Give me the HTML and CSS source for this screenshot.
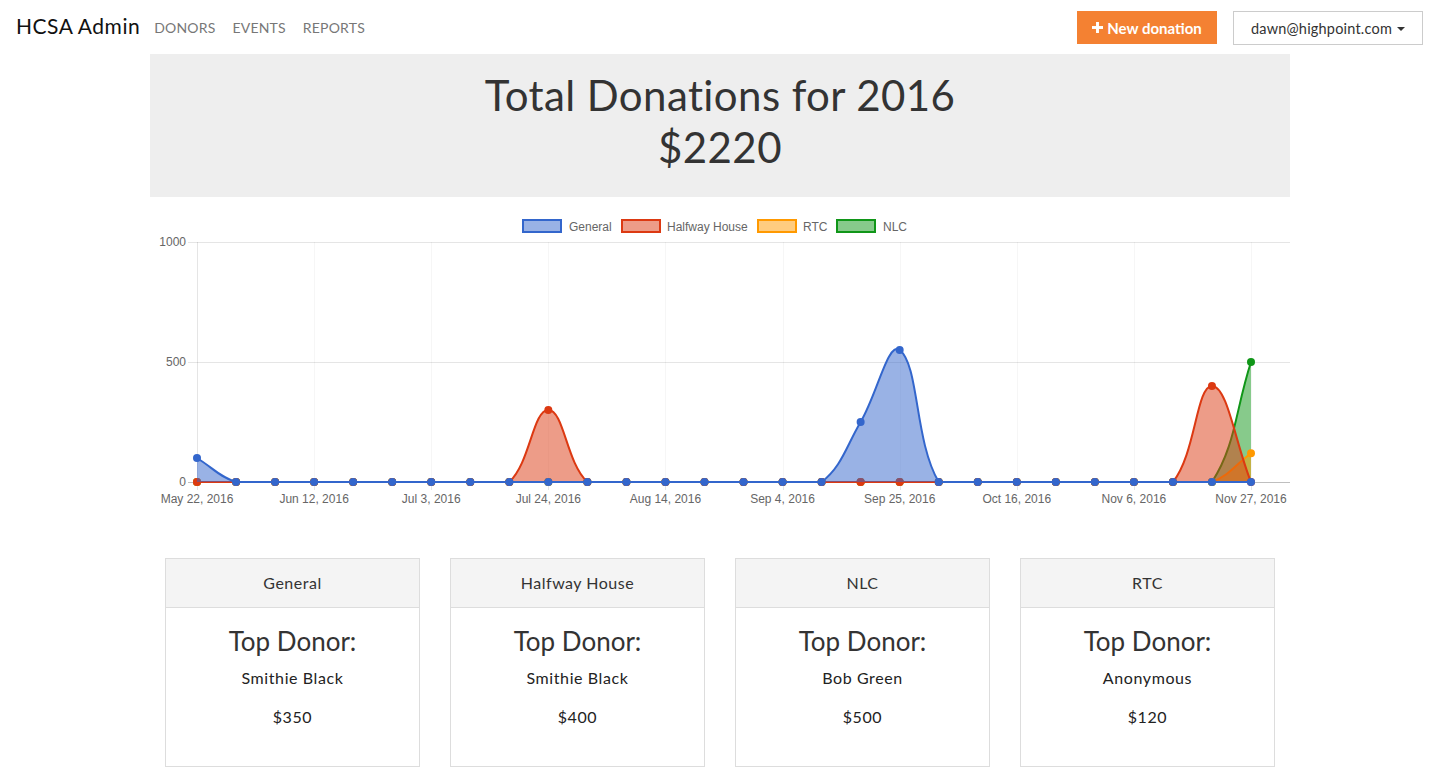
FILE: index.html
```html
<!DOCTYPE html>
<html lang="en">
<head>
<meta charset="utf-8">
<title>HCSA Admin</title>
<link rel="stylesheet" href="styles.css">
</head>
<body>
<nav class="navbar">
  <div class="nav-left">
    <a class="brand" href="#">HCSA Admin</a>
    <ul class="nav-links">
      <li><a href="#">DONORS</a></li>
      <li><a href="#">EVENTS</a></li>
      <li><a href="#">REPORTS</a></li>
    </ul>
  </div>
  <div class="nav-right">
    <button class="btn-new" type="button">
      <svg class="plus" viewBox="0 0 12 12" width="11" height="11" aria-hidden="true"><rect x="4.4" y="0" width="3.2" height="12" fill="#fff"/><rect x="0" y="4.4" width="12" height="3.2" fill="#fff"/></svg>
      New donation
    </button>
    <button class="btn-user" type="button">dawn@highpoint.com <span class="caret"></span></button>
  </div>
</nav>

<main class="container">
  <section class="jumbotron">
    <h1>Total Donations for 2016</h1>
    <h1>$2220</h1>
  </section>

  <section class="chart-wrap">
    <svg id="chart" class="chart" width="1140" height="300" viewBox="0 0 1140 300">
      <g class="legend">
        <rect x="373" y="10" width="38" height="12" fill="rgba(51,102,204,0.5)" stroke="#3366cc" stroke-width="2"/>
        <text x="419" y="21">General</text>
        <rect x="472" y="10" width="38" height="12" fill="rgba(220,57,18,0.5)" stroke="#dc3912" stroke-width="2"/>
        <text x="517" y="21">Halfway House</text>
        <rect x="608" y="10" width="38" height="12" fill="rgba(255,153,0,0.5)" stroke="#ff9900" stroke-width="2"/>
        <text x="653" y="21">RTC</text>
        <rect x="687" y="10" width="38" height="12" fill="rgba(16,150,24,0.5)" stroke="#109618" stroke-width="2"/>
        <text x="733" y="21">NLC</text>
      </g>
      <g id="grid"></g>
      <g id="series"></g>
    </svg>
  </section>

  <section class="cards">
    <div class="card">
      <div class="card-head">General</div>
      <div class="card-body">
        <h2>Top Donor:</h2>
        <p class="donor">Smithie Black</p>
        <p class="amount">$350</p>
      </div>
    </div>
    <div class="card">
      <div class="card-head">Halfway House</div>
      <div class="card-body">
        <h2>Top Donor:</h2>
        <p class="donor">Smithie Black</p>
        <p class="amount">$400</p>
      </div>
    </div>
    <div class="card">
      <div class="card-head">NLC</div>
      <div class="card-body">
        <h2>Top Donor:</h2>
        <p class="donor">Bob Green</p>
        <p class="amount">$500</p>
      </div>
    </div>
    <div class="card">
      <div class="card-head">RTC</div>
      <div class="card-body">
        <h2>Top Donor:</h2>
        <p class="donor">Anonymous</p>
        <p class="amount">$120</p>
      </div>
    </div>
  </section>
</main>
<script src="chart.js"></script>
</body>
</html>
```

FILE: styles.css
```css
* { box-sizing: border-box; }
html, body { margin: 0; padding: 0; background: #fff; }
body {
  font-family: Lato, "Open Sans", sans-serif;
  color: #333;
  font-size: 15px;
}
.navbar {
  height: 54px;
  display: flex;
  align-items: center;
  justify-content: space-between;
  padding: 0 17px 0 16px;
}
.nav-left { display: flex; align-items: center; }
.brand {
  font-size: 21px;
  color: #111;
  text-decoration: none;
  margin-top: -4px;
  letter-spacing: 0.5px;
}
.nav-links {
  display: flex;
  list-style: none;
  margin: 0 0 0 14px;
  padding: 0;
  gap: 17px;
}
.nav-links a {
  color: #777;
  text-decoration: none;
  font-size: 14px;
  letter-spacing: 0.2px;
}
.nav-right { display: flex; align-items: center; gap: 16px; margin-top: 2px; }
.btn-new {
  height: 33px;
  width: 140px;
  background: #f48132;
  border: 0;
  color: #fff;
  font-family: inherit;
  font-weight: 700;
  font-size: 15px;
  display: flex;
  align-items: center;
  justify-content: center;
  gap: 4px;
  padding: 0;
  margin-top: -1px;
}
.plus { display: block; margin-top: -1px; }
.btn-user {
  height: 34px;
  width: 190px;
  background: #fff;
  border: 1px solid #ccc;
  color: #333;
  font-family: inherit;
  font-size: 14.5px;
  letter-spacing: 0.2px;
  display: flex;
  align-items: center;
  justify-content: center;
  gap: 5px;
  padding: 0;
}
.caret {
  display: inline-block;
  width: 0;
  height: 0;
  border-top: 4px solid #333;
  border-left: 4px solid transparent;
  border-right: 4px solid transparent;
  margin-top: 2px;
}
.container {
  width: 1140px;
  margin: 0 auto;
}
.jumbotron {
  background: #eee;
  height: 143px;
  padding-top: 15px;
  text-align: center;
}
.jumbotron h1 {
  margin: 0;
  font-weight: 400;
  font-size: 42px;
  line-height: 52px;
  letter-spacing: 0.4px;
  color: #333;
}
.chart-wrap { padding-top: 13px; height: 361px; }
.chart { display: block; }
.chart text {
  font-family: "Liberation Sans", Arial, sans-serif;
  font-size: 12px;
  fill: #666;
}
.cards {
  display: grid;
  grid-template-columns: repeat(4, 1fr);
  gap: 30px;
  padding: 0 15px;
}
.card {
  border: 1px solid #ddd;
  height: 209px;
  text-align: center;
}
.card-head {
  background: #f4f4f4;
  border-bottom: 1px solid #ddd;
  height: 49px;
  line-height: 48px;
  font-size: 16px;
  letter-spacing: 0.5px;
  color: #333;
}
.card-body { padding-top: 18px; }
.card-body h2 {
  margin: 0;
  font-weight: 400;
  font-size: 26px;
  line-height: 30px;
  color: #333;
}
.card-body p { margin: 0; font-size: 16px; line-height: 22px; letter-spacing: 0.6px; color: #222; }
.card-body .donor { margin-top: 11px; }
.card-body .amount { margin-top: 17px; }
```

FILE: chart.js
```js
(function () {
  var NS = 'http://www.w3.org/2000/svg';
  var grid = document.getElementById('grid');
  var series = document.getElementById('series');
  var X0 = 47, X1 = 1101, Y0 = 272, TOP = 32, RIGHT = 1140, N = 28;
  var step = (X1 - X0) / (N - 1);
  function px(i) { return X0 + i * step; }
  function py(v) { return Y0 - v * (Y0 - TOP) / 1000; }
  function el(name, attrs, parent) {
    var e = document.createElementNS(NS, name);
    for (var k in attrs) e.setAttribute(k, attrs[k]);
    parent.appendChild(e);
    return e;
  }
  var light = 'rgba(0,0,0,0.1)';
  var faint = 'rgba(0,0,0,0.035)';
  // horizontal grid
  [1000, 500].forEach(function (v) {
    el('line', { x1: 38, x2: RIGHT, y1: py(v) + 0.5, y2: py(v) + 0.5, stroke: light, 'stroke-width': 1 }, grid);
  });
  // y axis
  el('line', { x1: X0 + 0.5, x2: X0 + 0.5, y1: TOP, y2: Y0 + 8, stroke: light, 'stroke-width': 1 }, grid);
  // vertical grid at label positions
  var labels = ['May 22, 2016', 'Jun 12, 2016', 'Jul 3, 2016', 'Jul 24, 2016', 'Aug 14, 2016',
    'Sep 4, 2016', 'Sep 25, 2016', 'Oct 16, 2016', 'Nov 6, 2016', 'Nov 27, 2016'];
  labels.forEach(function (t, k) {
    var x = Math.round(px(k * 3)) + 0.5;
    if (k > 0) {
      el('line', { x1: x, x2: x, y1: TOP, y2: Y0, stroke: faint, 'stroke-width': 1 }, grid);
      el('line', { x1: x, x2: x, y1: Y0, y2: Y0 + 8, stroke: light, 'stroke-width': 1 }, grid);
    }
    var tx = el('text', { x: px(k * 3), y: 293, 'text-anchor': 'middle' }, grid);
    tx.textContent = t;
  });
  el('line', { x1: 38, x2: RIGHT, y1: Y0 + 0.5, y2: Y0 + 0.5, stroke: 'rgba(0,0,0,0.25)', 'stroke-width': 1 }, grid);
  [[1000, '1000'], [500, '500'], [0, '0']].forEach(function (p) {
    var tx = el('text', { x: 36, y: py(p[0]) + 4, 'text-anchor': 'end' }, grid);
    tx.textContent = p[1];
  });

  function zeros() { var a = []; for (var i = 0; i < N; i++) a.push(0); return a; }
  var general = zeros(); general[0] = 100; general[17] = 250; general[18] = 550;
  var halfway = zeros(); halfway[9] = 300; halfway[26] = 400;
  var rtc = zeros(); rtc[27] = 120;
  var nlc = zeros(); nlc[27] = 500;

  var sets = [
    { data: nlc, color: '#109618', fill: 'rgba(16,150,24,0.5)' },
    { data: rtc, color: '#ff9900', fill: 'rgba(255,153,0,0.5)' },
    { data: halfway, color: '#dc3912', fill: 'rgba(220,57,18,0.5)' },
    { data: general, color: '#3366cc', fill: 'rgba(51,102,204,0.5)' }
  ];

  function clamp(v, lo, hi) { return Math.max(lo, Math.min(hi, v)); }

  sets.forEach(function (s) {
    var pts = s.data.map(function (v, i) { return { x: px(i), y: py(v) }; });
    var ctrl = pts.map(function (cur, i) {
      var prev = i > 0 ? pts[i - 1] : cur;
      var next = i < pts.length - 1 ? pts[i + 1] : cur;
      var d01 = Math.hypot(cur.x - prev.x, cur.y - prev.y);
      var d12 = Math.hypot(next.x - cur.x, next.y - cur.y);
      var s01 = d01 / (d01 + d12), s12 = d12 / (d01 + d12);
      if (isNaN(s01)) s01 = 0; if (isNaN(s12)) s12 = 0;
      var fa = 0.4 * s01, fb = 0.4 * s12;
      return {
        p: { x: clamp(cur.x - fa * (next.x - prev.x), X0, RIGHT), y: clamp(cur.y - fa * (next.y - prev.y), TOP, Y0) },
        n: { x: clamp(cur.x + fb * (next.x - prev.x), X0, RIGHT), y: clamp(cur.y + fb * (next.y - prev.y), TOP, Y0) }
      };
    });
    var d = 'M' + pts[0].x + ' ' + pts[0].y;
    for (var i = 1; i < pts.length; i++) {
      d += ' C' + ctrl[i - 1].n.x + ' ' + ctrl[i - 1].n.y + ' ' + ctrl[i].p.x + ' ' + ctrl[i].p.y + ' ' + pts[i].x + ' ' + pts[i].y;
    }
    var fillD = d + ' L' + pts[pts.length - 1].x + ' ' + Y0 + ' L' + pts[0].x + ' ' + Y0 + ' Z';
    el('path', { d: fillD, fill: s.fill, stroke: 'none' }, series);
    el('path', { d: d, fill: 'none', stroke: s.color, 'stroke-width': 2 }, series);
    pts.forEach(function (p) {
      el('circle', { cx: p.x, cy: p.y, r: 4, fill: s.color }, series);
    });
  });
})();
```
